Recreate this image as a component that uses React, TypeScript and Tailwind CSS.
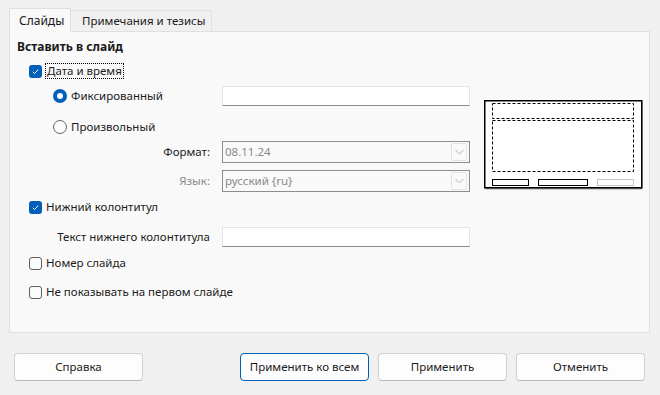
import React from "react";

const Check = ({ checked }: { checked: boolean }) =>
  checked ? (
    <span className="flex h-[13px] w-[13px] items-center justify-center rounded-[3px] bg-[#005fb8]">
      <svg width="9" height="9" viewBox="0 0 9 9">
        <path d="M1.8 4.8 L3.6 6.5 L7.2 2.6" fill="none" stroke="#fff" strokeWidth="1" />
      </svg>
    </span>
  ) : (
    <span className="h-[13px] w-[13px] rounded-[3px] border border-[#5d5d5d] bg-[#fbfbfb]" />
  );

const Radio = ({ checked }: { checked: boolean }) =>
  checked ? (
    <span className="flex h-[14px] w-[14px] items-center justify-center rounded-full bg-[#005fb8]">
      <span className="h-[6px] w-[6px] rounded-full bg-white" />
    </span>
  ) : (
    <span className="h-[14px] w-[14px] rounded-full border border-[#666] bg-[#fbfbfb]" />
  );

const TextInput = () => (
  <div className="h-[20px] w-[248px] border border-[#e5e5e5] border-b-[#8a8a8a] bg-white" />
);

const Select = ({ value }: { value: string }) => (
  <div className="flex h-[22px] w-[248px] items-center justify-between border border-[#8d8d8d] bg-[#f9f9f9] pl-[2px] pr-[2px]">
    <span className="text-[#8a8a8a]">{value}</span>
    <span className="flex h-[18px] w-[16px] items-center justify-center rounded-[2px] border border-[#e3e3e3]">
      <svg width="9" height="6" viewBox="0 0 9 6">
        <path d="M0.5 1 L4.5 5 L8.5 1" fill="none" stroke="#b0b0b0" strokeWidth="1" />
      </svg>
    </span>
  </div>
);

const Preview = () => (
  <svg width="160" height="90" viewBox="0 0 160 90">
    <rect x="1.5" y="1.5" width="157" height="88" fill="#a0a0a0" />
    <rect x="0.75" y="0.75" width="157" height="87" fill="#fff" stroke="#000" strokeWidth="1.5" />
    <rect x="8.5" y="3.5" width="141" height="15" fill="none" stroke="#000" strokeDasharray="3 2" />
    <rect x="8.5" y="20.5" width="141" height="51" fill="none" stroke="#000" strokeDasharray="3 2" />
    <rect x="8.5" y="79.5" width="36" height="6" fill="none" stroke="#000" />
    <rect x="54.5" y="79.5" width="49" height="6" fill="none" stroke="#000" />
    <rect x="113.5" y="79.5" width="36" height="6" fill="none" stroke="#c4c4c4" />
  </svg>
);

const Button = ({ label, primary }: { label: string; primary?: boolean }) => (
  <button
    className={
      "h-[28px] w-[129px] rounded-[4px] bg-[#fdfdfd] text-[#1b1b1b] " +
      (primary ? "border border-[#005fb8]" : "border border-[#d0d0d0] border-b-[#b8b8b8]")
    }
  >
    {label}
  </button>
);

export default function App() {
  return (
    <div
      className="h-[395px] w-[660px] bg-[#f0f0f0] text-[11.5px] text-[#1b1b1b]"
      style={{ fontFamily: '"Noto Sans", "Open Sans", sans-serif' }}
    >
      <div className="flex h-[31px] items-end pl-[9px] pt-[8px]">
        <div className="relative z-10 -mb-px flex h-[24px] w-[62px] items-center border border-b-0 border-[#e0e0e0] bg-[#f9f9f9] pl-[9px] text-[12px]">
          Слайды
        </div>
        <div className="flex h-[21px] w-[141px] items-center border border-l-0 border-b-0 border-[#e0e0e0] bg-[#f0f0f0] pl-[11px]">
          Примечания и тезисы
        </div>
      </div>

      <div className="ml-[9px] flex h-[302px] w-[641px] border border-[#e0e0e0] bg-[#f9f9f9] pl-[7px]">
        <div className="flex w-[453px] flex-col pt-[7px]">
          <div className="flex h-[16px] items-center text-[12px] font-bold">Вставить в слайд</div>

          <div className="mt-[5px] flex h-[22px] items-center pl-[12px]">
            <Check checked />
            <span className="ml-[3px] border border-dotted border-[#000] px-px leading-[14px]">Дата и время</span>
          </div>

          <div className="mt-[3px] flex h-[22px] items-center">
            <div className="flex w-[205px] items-center pl-[36px]">
              <Radio checked />
              <span className="ml-[4px]">Фиксированный</span>
            </div>
            <TextInput />
          </div>

          <div className="mt-[9px] flex h-[22px] items-center pl-[36px]">
            <Radio checked={false} />
            <span className="ml-[4px]">Произвольный</span>
          </div>

          <div className="mt-[3px] flex h-[22px] items-center">
            <div className="w-[205px] pr-[12px] text-right">Формат:</div>
            <Select value="08.11.24" />
          </div>

          <div className="mt-[7px] flex h-[22px] items-center">
            <div className="w-[205px] pr-[12px] text-right text-[#8c8c8c]">Язык:</div>
            <Select value="русский {ru}" />
          </div>

          <div className="mt-[4px] flex h-[22px] items-center pl-[12px]">
            <Check checked />
            <span className="ml-[4px]">Нижний колонтитул</span>
          </div>

          <div className="mt-[8px] flex h-[22px] items-center">
            <div className="w-[205px] pr-[12px] text-right">Текст нижнего колонтитула</div>
            <TextInput />
          </div>

          <div className="mt-[4px] flex h-[22px] items-center pl-[12px]">
            <Check checked={false} />
            <span className="ml-[4px]">Номер слайда</span>
          </div>

          <div className="mt-[7px] flex h-[22px] items-center pl-[12px]">
            <Check checked={false} />
            <span className="ml-[4px]">Не показывать на первом слайде</span>
          </div>
        </div>

        <div className="ml-[14px] mt-[68px]">
          <Preview />
        </div>
      </div>

      <div className="mt-[20px] flex items-center pl-[14px]">
        <Button label="Справка" />
        <div className="ml-[97px] flex gap-[9px]">
          <Button label="Применить ко всем" primary />
          <Button label="Применить" />
          <Button label="Отменить" />
        </div>
      </div>
    </div>
  );
}
